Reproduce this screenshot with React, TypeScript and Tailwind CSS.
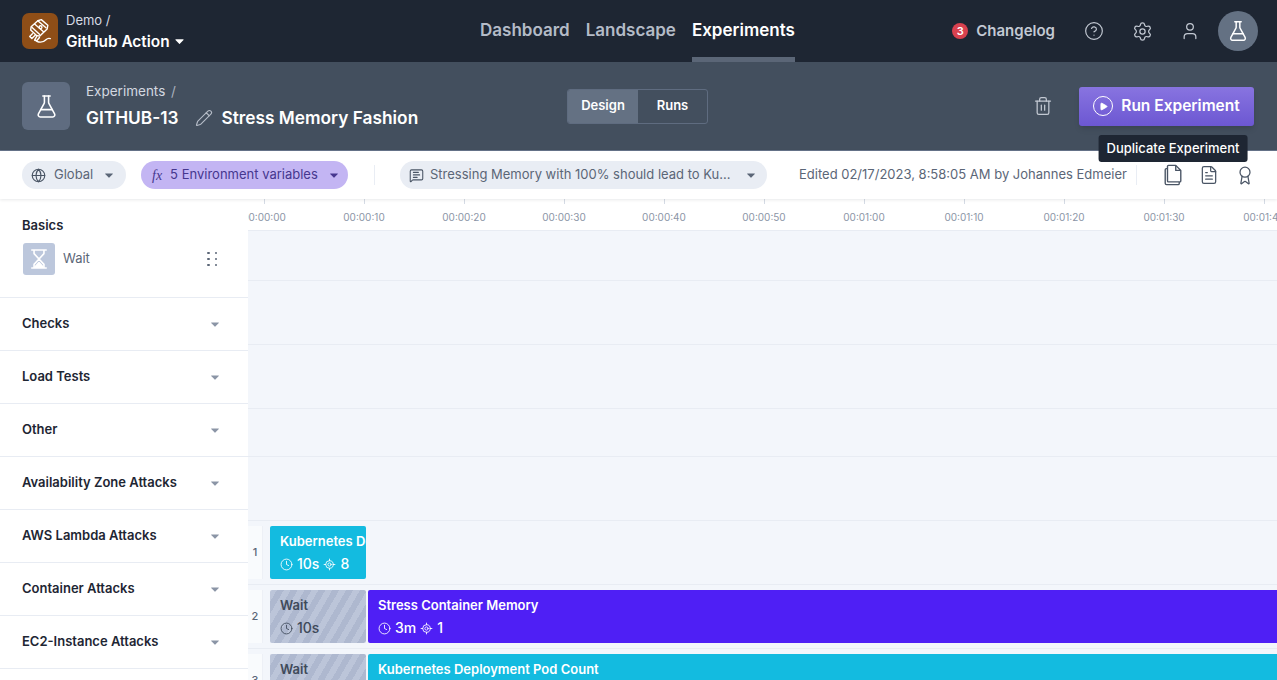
import {
  Award,
  Clock,
  FileText,
  FlaskConical,
  Globe,
  CircleHelp,
  LocateFixed,
  MessageSquareText,
  Pencil,
  Play,
  Settings,
  Trash2,
  User,
} from 'lucide-react';

function Caret({ className }: { className: string }) {
  return (
    <svg viewBox="0 0 10 6" className={className} fill="currentColor">
      <path d="M0.6 0.4h8.8a.5.5 0 0 1 .4.8L5.4 5.6a.5.5 0 0 1-.8 0L.2 1.2a.5.5 0 0 1 .4-.8z" />
    </svg>
  );
}

function Logo() {
  return (
    <svg viewBox="0 0 24 24" className="h-[26px] w-[26px]" fill="none" stroke="white" strokeWidth="1.3" strokeLinecap="round" strokeLinejoin="round">
      <path d="M10 2.500l3.200-1 6 5.200-.6 3.400-6.800 6.600-3-.6-5.400-5 .4-3z" />
      <path d="M7 5.500l8 7M10 2.500l7.500 6.500M4.500 8.500l7 6.500" />
      <path d="M5 14.500l-2.500 2.500 2 2 3-3M9 17l-2 3.500 2 .5 2.500-3" />
      <path d="M9 21.500c3.500 1.500 6.500.5 8.500-1.500 1-1 2.500-1.500 4-1" />
      <circle cx="12.500" cy="8.500" r="1.300" />
    </svg>
  );
}

function HourglassIcon() {
  return (
    <svg viewBox="0 0 20 24" className="h-[22px] w-[18px]" fill="none" stroke="white" strokeWidth="1.800" strokeLinejoin="round">
      <path d="M2 2h16M2 22h16" strokeLinecap="round" />
      <path d="M4.500 2v4l5.500 6-5.500 6v4M15.500 2v4L10 12l5.500 6v4" />
      <path d="M5.500 21l4.500-5 4.500 5z" fill="white" />
    </svg>
  );
}

function DuplicateIcon() {
  return (
    <svg viewBox="0 0 20 24" className="h-[22px] w-[20px] text-[#4a5565]" fill="none" stroke="currentColor" strokeWidth="1.500" strokeLinejoin="round">
      <path d="M5 1.500h8l5.500 5.500v11.500a1 1 0 0 1-1 1H5a1 1 0 0 1-1-1V2.500a1 1 0 0 1 1-1z" />
      <path d="M13 1.500V7h5.500" />
      <path d="M4 5H2.800a1.300 1.300 0 0 0-1.300 1.300V21a1.500 1.500 0 0 0 1.500 1.500h12.500a1.300 1.300 0 0 0 1.300-1.300v-1.700" />
    </svg>
  );
}

const categories = [
  'Checks',
  'Load Tests',
  'Other',
  'Availability Zone Attacks',
  'AWS Lambda Attacks',
  'Container Attacks',
  'EC2-Instance Attacks',
  'Host Attacks',
];

const ticks = ['00:00:00', '00:00:10', '00:00:20', '00:00:30', '00:00:40', '00:00:50', '00:01:00', '00:01:10', '00:01:20', '00:01:30', '00:01:40'];

const emptyLanes = ['h-[50px]', 'h-[64px]', 'h-[64px]', 'h-[48px]', 'h-[64px]'];

function Meta({ time, targets }: { time: string; targets?: string }) {
  return (
    <div className="mt-[5px] flex items-center text-[14px] font-medium leading-[18px]">
      <Clock className="h-[13px] w-[13px]" strokeWidth={1.6} />
      <span className="ml-[4px]">{time}</span>
      {targets && (
        <>
          <LocateFixed className="ml-[4px] h-[13px] w-[13px]" strokeWidth={1.6} />
          <span className="ml-[4px]">{targets}</span>
        </>
      )}
    </div>
  );
}

function Lane({ num, children }: { num: number; children: React.ReactNode }) {
  return (
    <div className="flex h-[64px] border-b border-[#e8ecf3]">
      <div className="my-[5px] flex w-[15px] shrink-0 items-center justify-center border-r border-[#edf0f6] bg-[#f9fbfd] text-[11px] font-medium text-[#5b6677]">
        {num}
      </div>
      <div className="flex min-w-0 flex-1 gap-[2px] pl-[7px] pt-[5px]">{children}</div>
    </div>
  );
}

function WaitBlock() {
  return (
    <div className="h-[53px] w-[96px] shrink-0 rounded-[2px] bg-[repeating-linear-gradient(120deg,#bcc5d9_0px,#bcc5d9_6px,#aeb8cf_6px,#aeb8cf_12px)] px-[10px] pt-[6px] text-[#3f4a5a]">
      <div className="text-[13px] font-semibold leading-[18px]">Wait</div>
      <Meta time="10s" />
    </div>
  );
}

export default function App() {
  return (
    <div className="flex h-screen flex-col overflow-hidden whitespace-nowrap bg-white font-['Inter',sans-serif]">
      <header className="flex h-[62px] shrink-0 items-center bg-[#1e2633] pl-[22px] pr-[19px]">
        <div className="flex w-[458px] shrink-0 items-center">
          <div className="flex h-[36px] w-[36px] items-center justify-center rounded-[7px] bg-[#8f4e17]">
            <Logo />
          </div>
          <div className="ml-[8px]">
            <div className="text-[13px] leading-[18px] text-[#d6dbe4]">Demo /</div>
            <div className="mt-[3px] flex items-center text-[15.4px] font-semibold leading-[20px] text-white">
              GitHub Action
              <Caret className="ml-[5px] h-[5px] w-[9px]" />
            </div>
          </div>
        </div>
        <nav className="flex h-full gap-[16px] text-[17px] font-semibold">
          <a className="flex items-center text-[#b4bbc7]">Dashboard</a>
          <a className="flex items-center text-[#b4bbc7]">Landscape</a>
          <a className="flex items-center border-b-[5px] border-[#5b6677] pt-[5px] text-white">Experiments</a>
        </nav>
        <div className="ml-auto flex items-center text-[#c3c9d3]">
          <span className="flex h-[16px] w-[16px] items-center justify-center rounded-full bg-[#d9414f] text-[11px] font-semibold text-white">3</span>
          <span className="ml-[8px] text-[15px] font-semibold">Changelog</span>
          <CircleHelp className="ml-[29px] h-[20px] w-[20px]" strokeWidth={1.4} />
          <Settings className="ml-[28px] h-[21px] w-[21px]" strokeWidth={1.4} />
          <User className="ml-[27px] h-[20px] w-[20px]" strokeWidth={1.5} />
          <div className="ml-[18px] flex h-[40px] w-[40px] items-center justify-center rounded-full bg-[#647183]">
            <FlaskConical className="h-[22px] w-[22px] text-white" strokeWidth={1.6} />
          </div>
        </div>
      </header>

      <section className="flex h-[89px] shrink-0 items-center border-b-[1px] border-[#66738a] bg-[#434f5e] pl-[22px] pr-[23px]">
        <div className="flex w-[545px] shrink-0 items-center">
          <div className="flex h-[48px] w-[48px] items-center justify-center rounded-[6px] bg-[#5f6c80]">
            <FlaskConical className="h-[25px] w-[25px] text-white" strokeWidth={1.5} />
          </div>
          <div className="ml-[16px]">
            <div className="text-[13.500px] leading-[18px] text-[#d3d8e0]">
              Experiments <span className="ml-[2px] text-[#aab2bf]">/</span>
            </div>
            <div className="mt-[6px] flex items-center text-[17.300px] font-semibold leading-[24px] text-white">
              GITHUB-13
              <Pencil className="ml-[17px] h-[18px] w-[18px] text-[#b5bcc7]" strokeWidth={1.5} />
              <span className="ml-[8px]">Stress Memory Fashion</span>
            </div>
          </div>
        </div>
        <div className="flex h-[35px] overflow-hidden rounded-[3px] border border-[#5f6c80] text-[13px] font-semibold text-white">
          <div className="flex w-[70px] items-center justify-center bg-[#647183]">Design</div>
          <div className="flex w-[69px] items-center justify-center">Runs</div>
        </div>
        <Trash2 className="ml-auto h-[20px] w-[20px] text-[#c3c9d3]" strokeWidth={1.5} />
        <button className="ml-[26px] flex h-[39px] w-[175px] items-center justify-center rounded-[3px] bg-[linear-gradient(#8874e0,#6c57d2)] text-[15.500px] font-semibold text-white shadow-md">
          <span className="flex h-[20px] w-[20px] items-center justify-center rounded-full border-[1.5px] border-white">
            <Play className="ml-[1px] h-[9px] w-[9px]" fill="white" />
          </span>
          <span className="ml-[8px]">Run Experiment</span>
        </button>
      </section>

      <section className="z-10 flex h-[48px] shrink-0 items-center bg-white pl-[22px] shadow-[0_1px_3px_rgba(30,38,51,0.1)]">
        <div className="flex h-[28px] w-[104px] items-center rounded-full bg-[#e9edf4] pl-[9px] text-[13px] text-[#5b6677]">
          <Globe className="h-[15px] w-[15px] text-[#4a5565]" strokeWidth={1.8} />
          <span className="ml-[8px]">Global</span>
          <Caret className="ml-[12px] h-[5px] w-[8px]" />
        </div>
        <div className="ml-[15px] flex h-[28px] w-[207px] items-center rounded-full bg-[#c3b5f3] pl-[11px] text-[13px] text-[#46378f]">
          <span className="font-['Liberation_Serif',serif] text-[14px] italic">fx</span>
          <span className="ml-[8px]">5 Environment variables</span>
          <Caret className="ml-[12px] h-[5px] w-[8px]" />
        </div>
        <div className="ml-[26px] h-[20px] w-px bg-[#e9edf4]" />
        <div className="ml-[25px] flex h-[28px] w-[367px] items-center rounded-full bg-[#e9edf4] pl-[9px] text-[13px] text-[#5b6677]">
          <MessageSquareText className="h-[15px] w-[15px] text-[#4a5565]" strokeWidth={1.7} />
          <span className="ml-[6px]">Stressing Memory with 100% should lead to Ku...</span>
          <Caret className="ml-auto mr-[12px] h-[5px] w-[8px]" />
        </div>
        <div className="ml-[32px] w-[327px] text-[13px] text-[#5b6677]">Edited 02/17/2023, 8:58:05 AM by Johannes Edmeier</div>
        <div className="ml-[10px] h-[20px] w-px bg-[#e9edf4]" />
        <div className="relative ml-[26px] flex h-[22px] w-[20px] items-center justify-center">
          <DuplicateIcon />
          <div className="absolute left-1/2 top-[-29px] -translate-x-1/2 rounded-[3px] bg-[#1e2633] px-[8px] py-[5px] text-[13px] font-medium leading-[17px] text-white">
            Duplicate Experiment
          </div>
        </div>
        <FileText className="ml-[16px] h-[22px] w-[20px] text-[#4a5565]" strokeWidth={1.5} />
        <Award className="ml-[16px] h-[23px] w-[20px] text-[#4a5565]" strokeWidth={1.5} />
      </section>

      <main className="flex min-h-0 flex-1">
        <aside className="w-[248px] shrink-0 bg-white">
          <div className="h-[99px] border-b border-[#e8ecf3] px-[22px] pt-[17px]">
            <div className="text-[13px] font-semibold leading-[18px] text-[#1e2633]">Basics</div>
            <div className="mt-[9px] flex items-center pl-[1px]">
              <div className="flex h-[32px] w-[32px] items-center justify-center rounded-[3px] bg-[#bcc7dc]">
                <HourglassIcon />
              </div>
              <span className="ml-[8px] text-[13px] text-[#5b6677]">Wait</span>
              <div className="ml-auto mr-[9px] grid grid-cols-2 gap-x-[5px] gap-y-[3.5px]">
                {[0, 1, 2, 3, 4, 5].map((d) => (
                  <span key={d} className="h-[2.5px] w-[2.5px] rounded-full bg-[#5b6677]" />
                ))}
              </div>
            </div>
          </div>
          {categories.map((c) => (
            <div key={c} className="flex h-[53px] items-center border-b border-[#e8ecf3] pl-[22px] pr-[29px]">
              <span className="text-[13px] font-semibold text-[#1e2633]">{c}</span>
              <Caret className="ml-auto h-[5px] w-[8px] text-[#8b95a6]" />
            </div>
          ))}
        </aside>

        <div className="min-w-0 flex-1 overflow-hidden bg-[#f3f6fb]">
          <div className="-ml-[34px] flex h-[32px] w-[1200px] border-b border-[#e8ecf3] bg-white">
            {ticks.map((t) => (
              <div key={t} className="flex w-[100px] shrink-0 flex-col items-center">
                <span className="h-[5px] w-px bg-[#d5dbe5]" />
                <span className="mt-[6px] text-[10px] leading-[14px] text-[#8b95a6]">{t}</span>
              </div>
            ))}
          </div>
          {emptyLanes.map((h, i) => (
            <div key={i} className={`${h} border-b border-[#e8ecf3]`} />
          ))}
          <Lane num={1}>
            <div className="h-[53px] w-[96px] shrink-0 overflow-hidden rounded-[2px] bg-[#13bbe0] pl-[10px] pt-[6px] text-white">
              <div className="text-[13px] font-semibold leading-[18px]">Kubernetes Deployment</div>
              <Meta time="10s" targets="8" />
            </div>
          </Lane>
          <Lane num={2}>
            <WaitBlock />
            <div className="h-[53px] flex-1 rounded-l-[2px] bg-[#4f1ff5] pl-[10px] pt-[6px] text-white">
              <div className="text-[13px] font-semibold leading-[18px]">Stress Container Memory</div>
              <Meta time="3m" targets="1" />
            </div>
          </Lane>
          <Lane num={3}>
            <WaitBlock />
            <div className="h-[53px] flex-1 rounded-l-[2px] bg-[#13bbe0] pl-[10px] pt-[6px] text-white">
              <div className="text-[13px] font-semibold leading-[18px]">Kubernetes Deployment Pod Count</div>
              <Meta time="3m" targets="1" />
            </div>
          </Lane>
        </div>
      </main>
    </div>
  );
}
